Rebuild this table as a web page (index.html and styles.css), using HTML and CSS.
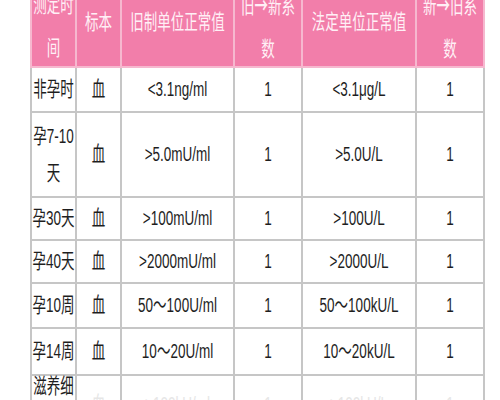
FILE: index.html
```html
<!DOCTYPE html>
<html lang="zh">
<head>
<meta charset="utf-8">
<title>HCG 单位换算</title>
<link rel="stylesheet" href="styles.css">
</head>
<body>
<div class="wrap">
<table class="tbl">
<colgroup>
<col class="c1"><col class="c2"><col class="c3"><col class="c4"><col class="c5"><col class="c6">
</colgroup>
<tr class="head">
<th><span class="t">测定时<br>间</span></th>
<th><span class="t up">标本</span></th>
<th><span class="t up">旧制单位正常值</span></th>
<th><span class="t">旧<span class="arr">→</span>新系<br>数</span></th>
<th><span class="t up">法定单位正常值</span></th>
<th><span class="t">新<span class="arr">→</span>旧系<br>数</span></th>
</tr>
<tr class="r1">
<td><span class="t">非孕时</span></td><td><span class="t">血</span></td><td><span class="t">&lt;3.1ng/ml</span></td><td><span class="t">1</span></td><td><span class="t">&lt;3.1μg/L</span></td><td><span class="t">1</span></td>
</tr>
<tr class="r2">
<td><span class="t">孕7-10<br>天</span></td><td><span class="t">血</span></td><td><span class="t">&gt;5.0mU/ml</span></td><td><span class="t">1</span></td><td><span class="t">&gt;5.0U/L</span></td><td><span class="t">1</span></td>
</tr>
<tr class="r3">
<td><span class="t">孕30天</span></td><td><span class="t">血</span></td><td><span class="t">&gt;100mU/ml</span></td><td><span class="t">1</span></td><td><span class="t">&gt;100U/L</span></td><td><span class="t">1</span></td>
</tr>
<tr class="r4">
<td><span class="t">孕40天</span></td><td><span class="t">血</span></td><td><span class="t">&gt;2000mU/ml</span></td><td><span class="t">1</span></td><td><span class="t">&gt;2000U/L</span></td><td><span class="t">1</span></td>
</tr>
<tr class="r5">
<td><span class="t">孕10周</span></td><td><span class="t">血</span></td><td><span class="t">50～100U/ml</span></td><td><span class="t">1</span></td><td><span class="t">50～100kU/L</span></td><td><span class="t">1</span></td>
</tr>
<tr class="r6">
<td><span class="t">孕14周</span></td><td><span class="t">血</span></td><td><span class="t">10～20U/ml</span></td><td><span class="t">1</span></td><td><span class="t">10～20kU/L</span></td><td><span class="t">1</span></td>
</tr>
<tr class="r7">
<td><span class="t">滋养细<br>胞病</span></td><td class="faint"><span class="t">血</span></td><td class="faint"><span class="t">&gt;100kU/ml</span></td><td class="faint"><span class="t">1</span></td><td class="faint"><span class="t">&gt;100kU/L</span></td><td class="faint"><span class="t">1</span></td>
</tr>
</table>
</div>
</body>
</html>
```
FILE: styles.css
```css
html, body {
  margin: 0;
  padding: 0;
  background: #ffffff;
  overflow: hidden;
}
.wrap {
  padding-left: 30px;
  margin-top: -14px;
}
.tbl {
  border-collapse: collapse;
  table-layout: fixed;
  width: 455px;
  font-family: "Liberation Sans", "Noto Sans CJK SC", sans-serif;
  font-size: 13.5px;
  color: #1e1e1e;
  border: 2px solid #c2c2c2;
}
.c1 { width: 45px; }
.c2 { width: 45px; }
.c3 { width: 113px; }
.c4 { width: 68px; }
.c5 { width: 114px; }
.c6 { width: 68px; }
.tbl th, .tbl td {
  padding: 0;
  text-align: center;
  vertical-align: middle;
  white-space: nowrap;
  overflow: visible;
}
.tbl td {
  border: 2px solid #c6c6c6;
  line-height: 24px;
}
.tbl th {
  background: #f27eaa;
  color: #fff0f6;
  font-weight: normal;
  border: 2px solid #f6b8cf;
  line-height: 28px;
  height: 78px;
}
.t {
  display: inline-block;
  vertical-align: middle;
  transform: scaleY(1.55);
}
.t.up {
  transform: translateY(-4px) scaleY(1.55);
}
.arr {
  font-family: "Noto Sans CJK SC", sans-serif;
  font-weight: bold;
}
.r1 td { height: 43px; }
.r2 td { height: 83px; }
.r3 td { height: 41px; }
.r4 td { height: 41px; }
.r5 td { height: 43px; }
.r6 td { height: 45px; }
.r7 td { height: 58px; }
.faint { color: #e6e6e6; }
```
